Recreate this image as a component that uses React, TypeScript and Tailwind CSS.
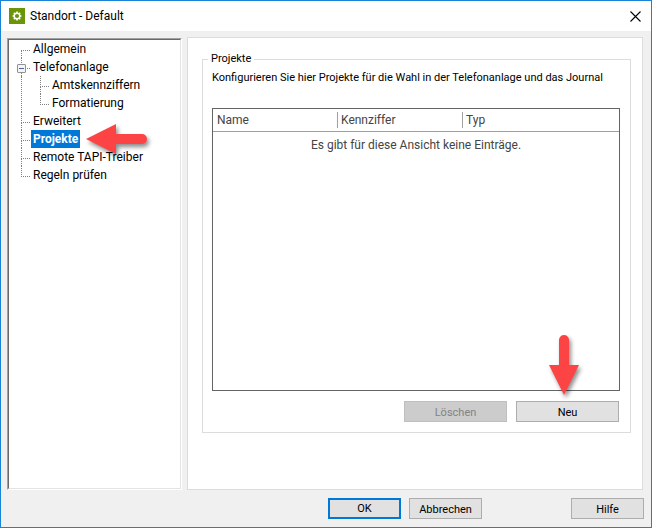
import { useState } from "react";
import clsx from "clsx";

type TreeNode = {
  label: string;
  children?: TreeNode[];
};

const treeNodes: TreeNode[] = [
  { label: "Allgemein" },
  {
    label: "Telefonanlage",
    children: [{ label: "Amtskennziffern" }, { label: "Formatierung" }],
  },
  { label: "Erweitert" },
  { label: "Projekte" },
  { label: "Remote TAPI-Treiber" },
  { label: "Regeln prüfen" },
];

const columns = [
  { label: "Name", width: "w-[124px]" },
  { label: "Kennziffer", width: "w-[125px]" },
  { label: "Typ", width: "" },
];

const gearTeeth = [0, 45, 90, 135, 180, 225, 270, 315];

export default function App() {
  const [selected, setSelected] = useState("Projekte");

  return (
    <div className="flex min-h-screen flex-col border border-[#1883d7] bg-[#f0f0f0] font-['Roboto','Open_Sans',sans-serif] text-xs text-black">
      <TitleBar title="Standort - Default" />

      <div className="flex flex-1 gap-[5px] px-[7px] pt-[6px] pr-2">
        <nav className="-ml-px mt-px w-[175px] shrink-0 border border-t-[#a0a0a0] border-r-white border-b-white border-l-[#a0a0a0]">
          <div className="h-full border border-t-[#696969] border-r-[#e3e3e3] border-b-[#e3e3e3] border-l-[#696969] bg-white pl-3">
            <ul>
              {treeNodes.map((node, i) => (
                <TreeItem
                  key={node.label}
                  node={node}
                  first={i === 0}
                  last={i === treeNodes.length - 1}
                  selected={selected}
                  onSelect={setSelected}
                />
              ))}
            </ul>
          </div>
        </nav>

        <main className="flex min-w-0 flex-1 flex-col border border-[#dcdcdc] bg-white px-[11px] pt-3 pb-14 pl-[14px]">
          <fieldset className="flex min-w-0 flex-1 flex-col border border-[#dcdcdc] px-[10px] pb-[10px] pl-[9px] text-[11px]">
            <legend className="-ml-1 px-[3px] leading-[18px]">Projekte</legend>
            <p className="mt-[2px] leading-4">
              Konfigurieren Sie hier Projekte für die Wahl in der Telefonanlage und das Journal
            </p>

            <div className="mt-[22px] flex-1 border border-[#646464] text-xs text-[#444444]">
              <table className="w-full table-fixed border-collapse">
                <thead>
                  <tr className="border-b border-[#a0a0a0]">
                    {columns.map((column, i) => (
                      <th
                        key={column.label}
                        className={clsx("h-[22px] p-0 text-left font-normal", column.width)}
                      >
                        <div
                          className={clsx(
                            "h-4 border-l pl-[3px] leading-4",
                            i === 0 ? "border-transparent" : "border-[#a0a0a0]"
                          )}
                        >
                          {column.label}
                        </div>
                      </th>
                    ))}
                  </tr>
                </thead>
                <tbody>
                  <tr>
                    <td colSpan={3} className="p-0 pt-1 text-center leading-[18px]">
                      Es gibt für diese Ansicht keine Einträge.
                    </td>
                  </tr>
                </tbody>
              </table>
            </div>

            <div className="mt-[10px] flex justify-end gap-[9px] pr-px">
              <button
                type="button"
                disabled
                className="h-[21px] w-[103px] border border-[#bfbfbf] bg-[#cccccc] pt-0.5 leading-4 text-[#838383]"
              >
                Löschen
              </button>
              <div className="relative">
                <button
                  type="button"
                  className="h-[21px] w-[103px] border border-[#adadad] bg-[#e1e1e1] pt-0.5 leading-4"
                >
                  Neu
                </button>
                <DownArrow />
              </div>
            </div>
          </fieldset>
        </main>
      </div>

      <footer className="flex justify-end gap-2 px-[7px] pt-2 pb-2 text-[11px]">
        <button
          type="button"
          className="h-[21px] w-[73px] border-2 border-[#0078d7] bg-[#e1e1e1] pt-px leading-4"
        >
          OK
        </button>
        <button
          type="button"
          className="mr-[81px] h-[21px] w-[73px] border border-[#adadad] bg-[#e1e1e1] pt-0.5 leading-4"
        >
          Abbrechen
        </button>
        <button
          type="button"
          className="h-[21px] w-[73px] border border-[#adadad] bg-[#e1e1e1] pt-0.5 leading-4"
        >
          Hilfe
        </button>
      </footer>
    </div>
  );
}

function TitleBar({ title }: { title: string }) {
  return (
    <header className="flex h-[30px] items-center bg-white pl-2">
      <svg className="h-4 w-4" viewBox="0 0 16 16" aria-hidden="true">
        <rect width="16" height="16" fill="#6a9509" />
        <circle cx="8" cy="8" r="2.8" fill="none" stroke="#fff" strokeWidth="1.5" />
        {gearTeeth.map((angle) => (
          <path
            key={angle}
            d="M7.2 3.6h1.6v1.6H7.2z"
            fill="#fff"
            transform={`rotate(${angle} 8 8)`}
          />
        ))}
      </svg>
      <h1 className="ml-[5px] flex-1 leading-4">{title}</h1>
      <button type="button" aria-label="Schließen" className="mr-[9px] p-px">
        <svg className="h-[11px] w-[11px]" viewBox="0 0 11 11" aria-hidden="true">
          <path d="M.5.5l10 10M10.5.5l-10 10" stroke="#000" strokeWidth="1.1" fill="none" />
        </svg>
      </button>
    </header>
  );
}

function TreeItem({
  node,
  first,
  last,
  selected,
  onSelect,
}: {
  node: TreeNode;
  first?: boolean;
  last?: boolean;
  selected: string;
  onSelect: (label: string) => void;
}) {
  const [open, setOpen] = useState(true);
  const isSelected = node.label === selected;

  return (
    <li>
      <div className="relative flex h-[18px] items-center">
        <Connector first={first} last={last} />
        {node.children && (
          <button
            type="button"
            aria-label={open ? "Zuklappen" : "Aufklappen"}
            onClick={() => setOpen(!open)}
            className="absolute top-[6px] -left-1 flex h-[9px] w-[9px] items-center justify-center rounded-[1px] border border-[#919191] bg-[#f4f4f4]"
          >
            <span className="h-px w-[5px] bg-[#4b63a7]" />
          </button>
        )}
        <button
          type="button"
          onClick={() => onSelect(node.label)}
          className={clsx(
            "h-[18px] px-[2px] leading-4 whitespace-nowrap",
            isSelected && "bg-[#0078d7] font-bold text-white"
          )}
        >
          {node.label}
        </button>
        {node.label === "Projekte" && <LeftArrow />}
      </div>
      {node.children && open && (
        <div className={clsx("pl-[18px]", !last && "border-l border-dotted border-[#808080]")}>
          <ul>
            {node.children.map((child, i) => (
              <TreeItem
                key={child.label}
                node={child}
                last={i === node.children!.length - 1}
                selected={selected}
                onSelect={onSelect}
              />
            ))}
          </ul>
        </div>
      )}
    </li>
  );
}

function Connector({ first, last }: { first?: boolean; last?: boolean }) {
  return (
    <span className="mr-px flex h-[18px] w-[9px] shrink-0 flex-col">
      <span
        className={clsx(
          "h-[11px] border-b border-dotted border-[#808080]",
          !first && "border-l"
        )}
      />
      <span className={clsx("h-[7px] border-dotted border-[#808080]", !last && "border-l")} />
    </span>
  );
}

function LeftArrow() {
  return (
    <svg
      className="pointer-events-none absolute -top-2 left-[64px] z-10 h-10 w-[68px] drop-shadow-[2px_3px_2px_rgba(0,0,0,0.45)]"
      viewBox="0 0 68 40"
      aria-hidden="true"
    >
      <path d="M1 17L31 2v10h26a5 5 0 0 1 0 10H31v10z" fill="#fd4444" />
    </svg>
  );
}

function DownArrow() {
  return (
    <svg
      className="pointer-events-none absolute -top-[68px] left-[28px] h-[68px] w-10 drop-shadow-[2px_3px_2px_rgba(0,0,0,0.45)]"
      viewBox="0 0 40 68"
      aria-hidden="true"
    >
      <path d="M20 62L5 32h10V7a5 5 0 0 1 10 0v25h10z" fill="#fd4444" />
    </svg>
  );
}
